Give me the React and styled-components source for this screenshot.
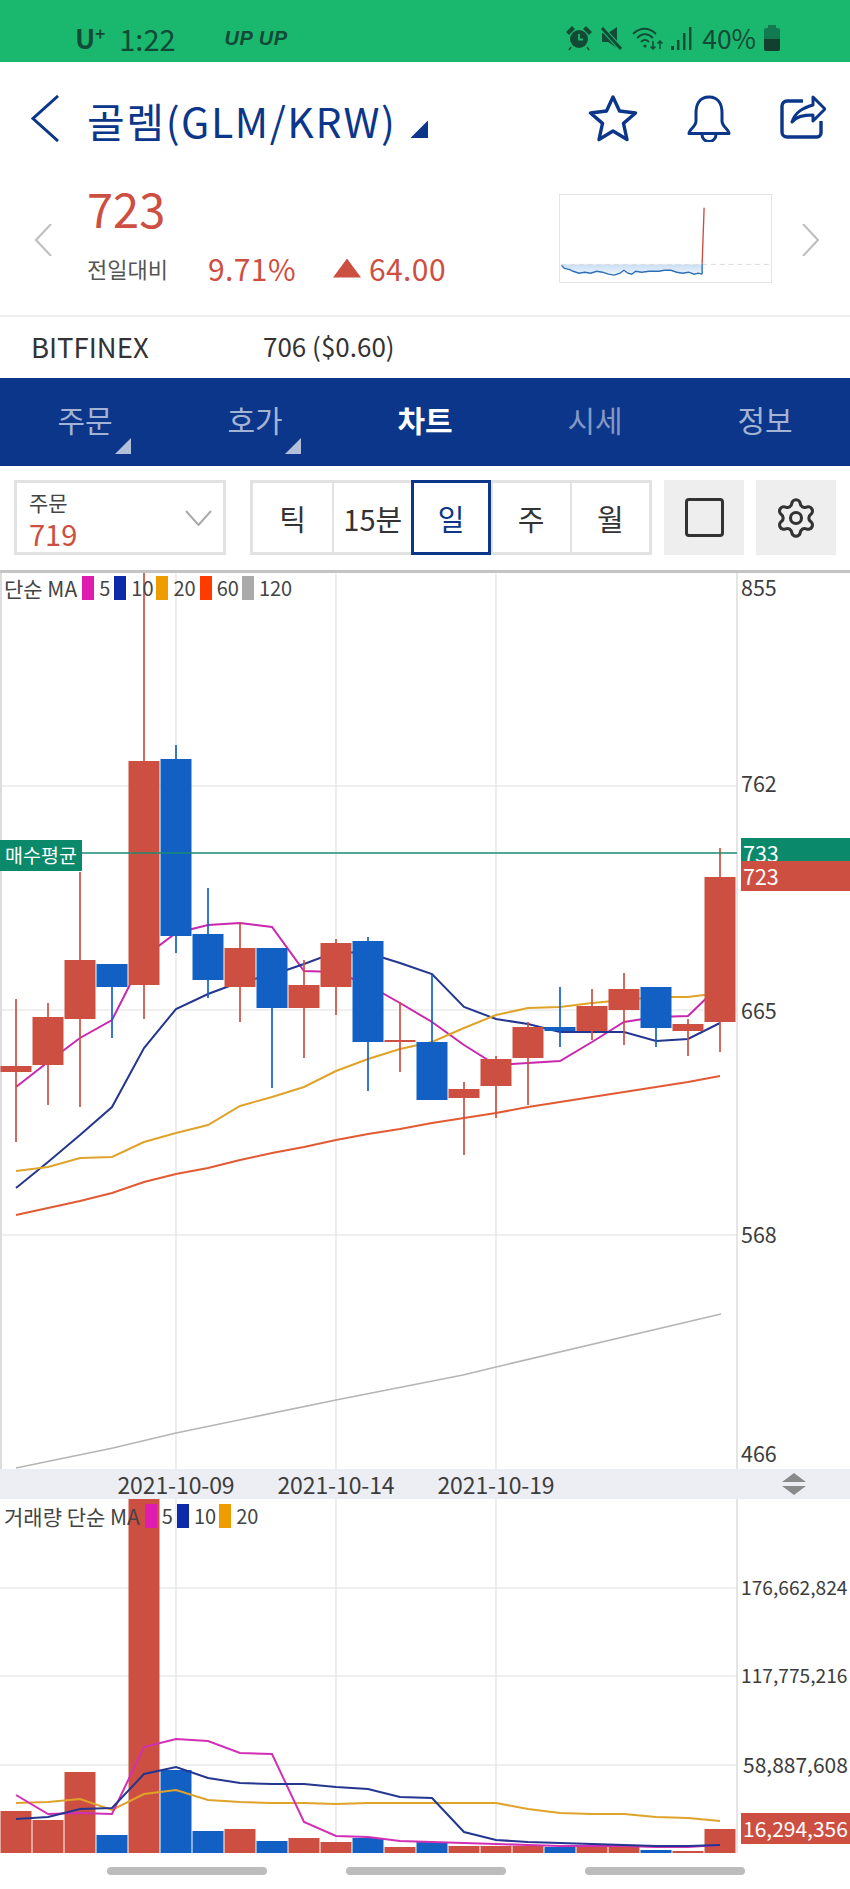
import React from "react";
import styled, { createGlobalStyle } from "styled-components";
import { Settings } from "lucide-react";

const NAVY = "#0b3689";
const RED = "#cd4f42";
const BLUE = "#1360c4";
const TEAL = "#0a8a6a";
const FONT = `"Noto Sans CJK KR", "Noto Sans", sans-serif`;

const GlobalStyle = createGlobalStyle`
  body {
    margin: 0;
    background: #fff;
    font-family: ${FONT};
    color: #333;
  }
`;

const Page = styled.div`
  width: 850px;
  height: 1889px;
  overflow: hidden;
`;

/* status bar */
const StatusBar = styled.div`
  height: 62px;
  background: #1ab86f;
  color: #134a35;
  display: flex;
  align-items: center;
  padding: 14px 70px 0 75px;
  box-sizing: border-box;
`;
const Carrier = styled.span`
  font-size: 27px;
  font-weight: 700;
  line-height: 30px;
  sup {
    font-size: 17px;
    line-height: 0;
    vertical-align: 9px;
  }
`;
const Clock = styled.span`
  font-size: 29px;
  line-height: 30px;
  margin-left: 14px;
`;
const AppMark = styled.span`
  font: italic 700 20px/20px "Liberation Sans", sans-serif;
  letter-spacing: 0.5px;
  margin-left: 49px;
`;
const StatusIcons = styled.div`
  margin-left: auto;
  display: flex;
  align-items: center;
  gap: 8px;
`;
const Battery = styled.span`
  font-size: 26.5px;
  line-height: 30px;
  margin-left: 2px;
`;

/* title */
const TitleRow = styled.div`
  height: 110px;
  display: flex;
  align-items: flex-start;
  padding: 33px 24px 0 31px;
  box-sizing: border-box;
`;
const Title = styled.h1`
  margin: 0 0 0 27px;
  font-size: 41px;
  font-weight: 400;
  line-height: 50px;
  letter-spacing: 1.6px;
  color: ${NAVY};
  white-space: nowrap;
`;
const TitleCaret = styled.span`
  width: 18px;
  height: 18px;
  margin: 25px 0 0 14px;
  background: ${NAVY};
  clip-path: polygon(100% 0, 100% 100%, 0 100%);
`;
const HeaderIcons = styled.div`
  margin-left: auto;
  display: flex;
  gap: 49px;
`;

/* quote */
const Quote = styled.div`
  height: 143px;
  display: flex;
  padding: 0 31px 0 35px;
  box-sizing: border-box;
`;
const SideArrow = styled.svg`
  flex: none;
  margin-top: 52px;
`;
const QuoteMain = styled.div`
  margin-left: 35px;
  padding-top: 12px;
`;
const Price = styled.div`
  font-size: 47px;
  line-height: 48px;
  color: ${RED};
`;
const ChangeRow = styled.div`
  display: flex;
  align-items: center;
  margin-top: 19px;
  height: 34px;
  color: ${RED};
  font-size: 30px;
  letter-spacing: 0.4px;
  white-space: nowrap;
`;
const ChangeCaption = styled.span`
  font-size: 22px;
  letter-spacing: 0;
  color: #555;
  width: 121px;
`;
const ChangeRate = styled.span`
  width: 125px;
`;
const UpMark = styled.span`
  width: 28px;
  height: 19px;
  margin-right: 8px;
  background: ${RED};
  clip-path: polygon(50% 0, 100% 100%, 0 100%);
`;
const Spark = styled.svg`
  flex: none;
  margin: 22px 0 0 auto;
  border: 1px solid #e4e4e4;
  box-sizing: border-box;
`;
const SparkNext = styled(SideArrow)`
  margin-left: 30px;
`;

/* exchange row */
const ExchangeRow = styled.div`
  height: 63px;
  border-top: 2px solid #eee;
  box-sizing: border-box;
  display: flex;
  align-items: center;
  padding: 0 0 4px 31px;
  font-size: 26px;
  color: #333;
`;
const ExchangeName = styled.span`
  width: 232px;
  font-size: 27.5px;
`;

/* tabs */
const Tabs = styled.div`
  height: 88px;
  background: ${NAVY};
  display: grid;
  grid-template-columns: repeat(5, 170px);
`;
const Tab = styled.div`
  position: relative;
  display: flex;
  align-items: center;
  justify-content: center;
  padding-bottom: 6px;
  box-sizing: border-box;
  font-size: 30px;
  font-weight: ${(p) => (p.$active ? 700 : 400)};
  color: ${(p) => (p.$active ? "#fff" : p.$dim ? "#8598c3" : "#a3b3d3")};
`;
const TabCorner = styled.span`
  position: absolute;
  right: 39px;
  bottom: 12px;
  width: 16px;
  height: 16px;
  background: #b3c0da;
  clip-path: polygon(100% 0, 100% 100%, 0 100%);
`;

/* controls */
const Controls = styled.div`
  height: 105px;
  padding: 14px 13px 16px 14px;
  box-sizing: border-box;
  display: flex;
`;
const Select = styled.div`
  width: 212px;
  border: 3px solid #e2e2e2;
  box-sizing: border-box;
  display: flex;
  align-items: center;
  justify-content: space-between;
  padding: 0 11px 0 12px;
`;
const SelectLabel = styled.div`
  font-size: 21px;
  line-height: 30px;
  color: #444;
`;
const SelectValue = styled.div`
  font-size: 29px;
  line-height: 32px;
  color: ${RED};
`;
const Segments = styled.div`
  width: 402px;
  margin-left: 24px;
  border: 3px solid #e2e2e2;
  box-sizing: border-box;
  display: grid;
  grid-template-columns: repeat(5, 1fr);
`;
const Segment = styled.div`
  display: flex;
  align-items: center;
  justify-content: center;
  font-size: 29px;
  color: ${(p) => (p.$active ? NAVY : "#333")};
  margin: ${(p) => (p.$active ? "-3px 0" : "0")};
  outline: ${(p) => (p.$active ? `3px solid ${NAVY}` : "none")};
  outline-offset: -3px;
  border-left: ${(p) => (p.$first || p.$active ? "none" : "2px solid #e2e2e2")};
`;
const SquareButton = styled.div`
  width: 80px;
  margin-left: 12px;
  background: #eee;
  display: flex;
  align-items: center;
  justify-content: center;
`;
const Outline = styled.span`
  width: 39px;
  height: 39px;
  border: 3px solid #333;
  border-radius: 4px;
  box-sizing: border-box;
`;

/* charts */
const Pane = styled.div`
  position: relative;
  height: ${(p) => p.$height}px;
`;
const PriceTop = styled(Pane)`
  border-top: 3px solid #c4c4c4;
  margin-top: -1px;
  height: 896px;
`;
const ChartSvg = styled.svg`
  display: block;
`;
const Legend = styled.div`
  position: absolute;
  left: 4px;
  top: ${(p) => p.$top}px;
  display: flex;
  align-items: center;
  font-size: 21px;
  line-height: 24px;
  color: #444;
  white-space: nowrap;
`;
const LegendValue = styled.span`
  font-size: 20px;
`;
const Swatch = styled.span`
  width: 12px;
  height: 24px;
  background: ${(p) => p.$color};
  margin: 0 5px 0 ${(p) => p.$gap}px;
`;
const AxisLabel = styled.span`
  position: absolute;
  left: ${(p) => p.$left || 741}px;
  top: ${(p) => p.$y}px;
  transform: translateY(-50%);
  font-size: ${(p) => p.$size || 21.5}px;
  line-height: 24px;
  color: #3d3d3d;
  white-space: nowrap;
`;
const AxisTag = styled.div`
  position: absolute;
  left: 741px;
  right: 0;
  top: ${(p) => p.$top}px;
  height: ${(p) => p.$height}px;
  background: ${(p) => p.$bg};
  color: #fff;
  font-size: ${(p) => p.$size || 21.5}px;
  line-height: ${(p) => p.$line}px;
  overflow: hidden;
  white-space: nowrap;
  padding-left: 2px;
`;
const AverageTag = styled.div`
  position: absolute;
  left: 0;
  top: 267px;
  width: 82px;
  height: 31px;
  background: ${TEAL};
  color: #fff;
  font-size: 19.5px;
  line-height: 30px;
  text-align: center;
  white-space: nowrap;
`;
const TimeStrip = styled.div`
  position: relative;
  height: 30px;
  background: #eceef3;
  z-index: 1;
`;
const DateLabel = styled.span`
  position: absolute;
  left: ${(p) => p.$x}px;
  top: 0;
  transform: translateX(-50%);
  font-size: 23px;
  line-height: 30px;
  letter-spacing: -0.1px;
  color: #3d3d3d;
`;
const ScrollHandle = styled.svg`
  position: absolute;
  left: 782px;
  top: 4px;
`;

/* navigation hint */
const Pills = styled.div`
  height: 36px;
  display: flex;
  padding: 14px 0 0 107px;
  box-sizing: border-box;
  gap: 79px;
`;
const Pill = styled.span`
  width: 160px;
  height: 8px;
  border-radius: 4px;
  background: #bcbcbc;
`;

/* data, in page pixels */
const candleX = (i) => 16 + 32 * i;
const candles = [
  ["r", 1066, 1072, 999, 1142],
  ["r", 1017, 1065, 1003, 1105],
  ["r", 960, 1019, 872, 1107],
  ["b", 964, 987, 964, 1038],
  ["r", 761, 985, 572, 1019],
  ["b", 759, 936, 745, 953],
  ["b", 934, 980, 888, 998],
  ["r", 948, 987, 922, 1022],
  ["b", 948, 1008, 948, 1088],
  ["r", 985, 1008, 960, 1058],
  ["r", 943, 987, 939, 1015],
  ["b", 941, 1042, 937, 1091],
  ["r", 1040, 1042, 1002, 1072],
  ["b", 1042, 1100, 975, 1100],
  ["r", 1089, 1098, 1082, 1155],
  ["r", 1059, 1086, 1056, 1118],
  ["r", 1027, 1058, 1022, 1105],
  ["b", 1027, 1031, 987, 1047],
  ["r", 1006, 1031, 989, 1040],
  ["r", 989, 1010, 973, 1045],
  ["b", 987, 1028, 987, 1047],
  ["r", 1024, 1031, 1019, 1056],
  ["r", 877, 1022, 848, 1052],
];
const priceLines = [
  { color: "#c927ad", ys: [1087, 1062, 1038, 1020, 957, 933, 925, 923, 927, 971, 972, 985, 1003, 1022, 1045, 1065, 1063, 1061, 1042, 1022, 1017, 1016, 985] },
  { color: "#24368f", ys: [1188, 1162, 1135, 1107, 1048, 1009, 994, 982, 975, 964, 952, 953, 963, 974, 1007, 1019, 1024, 1032, 1032, 1032, 1041, 1039, 1023] },
  { color: "#e0a32a", ys: [1171, 1167, 1158, 1157, 1142, 1133, 1125, 1106, 1097, 1087, 1071, 1059, 1049, 1042, 1028, 1015, 1008, 1007, 1003, 1000, 997, 997, 993] },
  { color: "#e25a34", ys: [1215, 1208, 1201, 1193, 1182, 1174, 1168, 1160, 1153, 1147, 1140, 1134, 1129, 1123, 1118, 1113, 1107, 1102, 1097, 1092, 1087, 1082, 1076] },
];
const longLine = "16,1468 113,1448 176,1433 336,1400 463,1375 496,1367 721,1314";
const volumes = [
  ["r", 1811], ["r", 1820], ["r", 1772], ["b", 1835], ["r", 1499], ["b", 1770],
  ["b", 1831], ["r", 1829], ["b", 1841], ["r", 1838], ["r", 1842], ["b", 1838],
  ["r", 1847], ["b", 1842], ["r", 1846], ["r", 1846], ["r", 1846], ["b", 1847],
  ["r", 1847], ["r", 1847], ["b", 1850], ["r", 1851], ["r", 1829],
];
const volumeLines = [
  { color: "#e0a32a", ys: [1803, 1802, 1799, 1810, 1794, 1790, 1800, 1802, 1803, 1803, 1804, 1803, 1803, 1803, 1803, 1803, 1809, 1813, 1814, 1814, 1817, 1818, 1821] },
  { color: "#d22fb5", ys: [1795, 1814, 1813, 1814, 1747, 1739, 1741, 1753, 1754, 1822, 1836, 1837, 1841, 1842, 1843, 1844, 1845, 1846, 1846, 1846, 1847, 1847, 1845] },
  { color: "#24368f", ys: [1819, 1817, 1809, 1808, 1774, 1767, 1778, 1783, 1784, 1784, 1787, 1789, 1797, 1798, 1832, 1840, 1842, 1843, 1844, 1845, 1846, 1846, 1845] },
];
const sparkPoints = [
  [0, 72], [3, 75], [8, 76], [12, 78], [18, 80], [24, 79], [30, 80], [36, 78], [42, 79], [48, 81], [54, 82],
  [60, 80], [64, 77], [68, 80], [72, 81], [76, 78], [82, 79], [90, 78], [100, 78], [105, 77], [112, 77],
  [118, 79], [124, 80], [130, 79], [136, 81], [140, 80], [144, 81],
];
const tabs = [
  { label: "주문", corner: true },
  { label: "호가", corner: true },
  { label: "차트", active: true },
  { label: "시세", dim: true },
  { label: "정보" },
];
const segments = ["틱", "15분", "일", "주", "월"];
const priceLegend = [
  { color: "#e01cb0", gap: 5, label: "5" },
  { color: "#0d2aa8", gap: 4, label: "10" },
  { color: "#ee9c00", gap: 3, label: "20" },
  { color: "#ff3b00", gap: 4, label: "60" },
  { color: "#ababab", gap: 3, label: "120" },
];
const volumeLegend = priceLegend.slice(0, 3);
const toPoints = (ys) => ys.map((y, i) => `${candleX(i)},${y}`).join(" ");

const Series = ({ lines }) =>
  lines.map((l) => (
    <polyline key={l.color} points={toPoints(l.ys)} fill="none" stroke={l.color} strokeWidth="2" />
  ));

const Grid = ({ rows, top, bottom }) => (
  <g stroke="#e2e2e2" strokeWidth="1.2">
    {rows.map((y) => (
      <line key={y} x1="0" x2="737" y1={y} y2={y} />
    ))}
    {[176, 336, 496].map((x) => (
      <line key={x} x1={x} x2={x} y1={top} y2={bottom} />
    ))}
    <line x1="737" x2="737" y1={top} y2={bottom} stroke="#d4d4d4" />
  </g>
);

const StatusGlyphs = () => (
  <StatusIcons>
    <svg width="26" height="26" viewBox="0 0 26 26">
      <circle cx="13" cy="14" r="9" fill="#134a35" />
      <path d="M13 9v5.5h4" fill="none" stroke="#1ab86f" strokeWidth="1.8" />
      <path d="M1 7l5-5 2 2-5 5zM25 7l-5-5-2 2 5 5zM5 22l-2 3M21 22l2 3" fill="#134a35" stroke="#134a35" strokeWidth="1.4" />
    </svg>
    <svg width="24" height="26" viewBox="0 0 24 26">
      <path d="M2 8h6l9-6v21l-9-6H2z" fill="#134a35" />
      <path d="M2 3l19 21" stroke="#1ab86f" strokeWidth="5" />
      <path d="M2 3l19 21" stroke="#134a35" strokeWidth="3" />
    </svg>
    <svg width="31" height="26" viewBox="0 0 31 26" fill="none" stroke="#134a35" strokeWidth="1.8">
      <path d="M1 9c7-7 16-7 23 0M5 13c5-5 11-5 16 0M9 17c3-3 5-3 8 0" />
      <circle cx="13" cy="21" r="1.6" fill="#134a35" stroke="none" />
      <path d="M21 16v8m-2.500-2.500l2.500 2.500 2.500-2.500M28 24v-8m-2.500 2.500l2.500-2.500 2.500 2.500" strokeWidth="1.5" />
    </svg>
    <svg width="21" height="25" viewBox="0 0 21 25" fill="#134a35">
      <rect x="0" y="20" width="3" height="4" />
      <rect x="6" y="14" width="2.4" height="10" />
      <rect x="12" y="7" width="2.4" height="17" />
      <rect x="18" y="1" width="2.4" height="23" />
    </svg>
    <Battery>40%</Battery>
    <svg width="16" height="26" viewBox="0 0 16 26">
      <rect x="4" y="0" width="8" height="3" fill="#127a50" />
      <rect x="0" y="3" width="16" height="23" rx="2" fill="#127a50" />
      <path d="M0 14h16v10a2 2 0 0 1-2 2H2a2 2 0 0 1-2-2z" fill="#123f2e" />
    </svg>
  </StatusIcons>
);

const HeaderGlyphs = () => (
  <HeaderIcons>
    <svg width="50" height="47" viewBox="0 0 50 47" fill="none" stroke={NAVY} strokeWidth="3.4" strokeLinejoin="round">
      <polygon points="25,2 31.5,16 47.5,18 35.5,28.4 39,44.5 25,36 11,44.5 14.5,28.4 2.5,18 18.5,16" />
    </svg>
    <svg width="44" height="47" viewBox="0 0 44 47" fill="none" stroke={NAVY} strokeWidth="3" strokeLinejoin="round">
      <path d="M22 2C12 2 9 10 9 18v8C9 32 2 34 2 38.500h40C42 34 35 32 35 26v-8C35 10 32 2 22 2z" />
      <path d="M15 39.500a7 7 0 0 0 14 0" />
    </svg>
    <svg width="46" height="44" viewBox="0 0 46 44" fill="none" stroke={NAVY} strokeWidth="3" strokeLinejoin="round">
      <path d="M23 6H7a5 5 0 0 0-5 5v26a5 5 0 0 0 5 5h30a4 4 0 0 0 4-4V26" strokeWidth="3.4" />
      <path d="M12 27C15 17 23 13 33 10V2l12 12-12 12v-6c-9 0-16 1-21 7z" fill="#fff" />
    </svg>
  </HeaderIcons>
);

const Sparkline = () => {
  const line = sparkPoints.map((p) => p.join(",")).join(" ");
  return (
    <Spark width="213" height="89" viewBox="0 0 213 89">
      <defs>
        <linearGradient id="sparkFill" x1="0" y1="0" x2="0" y2="1">
          <stop offset="0" stopColor="#c9def5" />
          <stop offset="1" stopColor="#eef5fc" />
        </linearGradient>
      </defs>
      <polygon points={`0,71 ${line} 144,71`} fill="url(#sparkFill)" />
      <line x1="0" x2="213" y1="71" y2="71" stroke="#d9d9d9" strokeDasharray="5 4" />
      <polyline points={line} fill="none" stroke="#2d6fb7" strokeWidth="1.4" />
      <line x1="144" x2="144" y1="81" y2="70" stroke="#2d6fb7" strokeWidth="1.4" />
      <line x1="144" x2="146" y1="70" y2="13" stroke={RED} strokeWidth="1.4" />
    </Spark>
  );
};

const PriceChart = () => (
  <PriceTop>
    <ChartSvg width="850" height="896" viewBox="0 573 850 896">
      <line x1="1" x2="1" y1="573" y2="1469" stroke="#dcdcdc" strokeWidth="2" />
      <Grid rows={[786, 1010, 1235]} top={573} bottom={1469} />
      <polyline points={longLine} fill="none" stroke="#b5b5b5" strokeWidth="1.6" />
      <Series lines={priceLines} />
      {candles.map(([kind, top, bottom, high, low], i) => (
        <g key={i} fill={kind === "r" ? RED : BLUE}>
          <rect x={candleX(i) - 1} y={high} width="2" height={low - high} opacity="0.85" />
          <rect x={candleX(i) - 15.5} y={top} width="31" height={bottom - top} />
        </g>
      ))}
      <line x1="82" x2="737" y1="853" y2="853" stroke="#1a8a72" strokeWidth="1.5" />
    </ChartSvg>
    <Legend $top={3}>
      단순 MA
      {priceLegend.map((item) => (
        <React.Fragment key={item.label}>
          <Swatch $color={item.color} $gap={item.gap} />
          <LegendValue>{item.label}</LegendValue>
        </React.Fragment>
      ))}
    </Legend>
    <AverageTag>매수평균</AverageTag>
    <AxisLabel $y={14}>855</AxisLabel>
    <AxisLabel $y={210}>762</AxisLabel>
    <AxisLabel $y={437}>665</AxisLabel>
    <AxisLabel $y={661}>568</AxisLabel>
    <AxisLabel $y={880}>466</AxisLabel>
    <AxisTag $top={265} $height={23} $bg={TEAL} $line={29}>733</AxisTag>
    <AxisTag $top={288} $height={30} $bg={RED} $line={30}>723</AxisTag>
  </PriceTop>
);

const VolumeChart = () => (
  <Pane $height={354}>
    <ChartSvg width="850" height="354" viewBox="0 1499 850 354">
      <Grid rows={[1588, 1676, 1765]} top={1499} bottom={1853} />
      {volumes.map(([kind, top], i) => (
        <rect key={i} x={candleX(i) - 15.5} y={top} width="31" height={1853 - top} fill={kind === "r" ? RED : BLUE} />
      ))}
      <Series lines={volumeLines} />
    </ChartSvg>
    <Legend $top={5}>
      거래량 단순 MA
      {volumeLegend.map((item) => (
        <React.Fragment key={item.label}>
          <Swatch $color={item.color} $gap={item.gap} />
          <LegendValue>{item.label}</LegendValue>
        </React.Fragment>
      ))}
    </Legend>
    <AxisLabel $y={88} $size={19.2}>176,662,824</AxisLabel>
    <AxisLabel $y={176} $size={19.2}>117,775,216</AxisLabel>
    <AxisLabel $y={265} $size={21} $left={743}>58,887,608</AxisLabel>
    <AxisTag $top={314} $height={31} $bg={RED} $line={30} $size={21}>16,294,356</AxisTag>
  </Pane>
);

export default function App() {
  return (
    <Page>
      <GlobalStyle />
      <StatusBar>
        <Carrier>U<sup>+</sup></Carrier>
        <Clock>1:22</Clock>
        <AppMark>UP UP</AppMark>
        <StatusGlyphs />
      </StatusBar>

      <TitleRow>
        <svg width="29" height="47" viewBox="0 0 29 47" fill="none" stroke={NAVY} strokeWidth="3">
          <polyline points="27,1 2,23.500 27,46" />
        </svg>
        <Title>골렘(GLM/KRW)</Title>
        <TitleCaret />
        <HeaderGlyphs />
      </TitleRow>

      <Quote>
        <SideArrow width="17" height="32" viewBox="0 0 17 32" fill="none" stroke="#bdbdbd" strokeWidth="2">
          <polyline points="16,0 1,16 16,32" />
        </SideArrow>
        <QuoteMain>
          <Price>723</Price>
          <ChangeRow>
            <ChangeCaption>전일대비</ChangeCaption>
            <ChangeRate>9.71%</ChangeRate>
            <UpMark />
            64.00
          </ChangeRow>
        </QuoteMain>
        <Sparkline />
        <SparkNext width="17" height="32" viewBox="0 0 17 32" fill="none" stroke="#bdbdbd" strokeWidth="2">
          <polyline points="1,0 16,16 1,32" />
        </SparkNext>
      </Quote>

      <ExchangeRow>
        <ExchangeName>BITFINEX</ExchangeName>
        706 ($0.60)
      </ExchangeRow>

      <Tabs>
        {tabs.map((t) => (
          <Tab key={t.label} $active={t.active} $dim={t.dim}>
            {t.label}
            {t.corner && <TabCorner />}
          </Tab>
        ))}
      </Tabs>

      <Controls>
        <Select>
          <div>
            <SelectLabel>주문</SelectLabel>
            <SelectValue>719</SelectValue>
          </div>
          <svg width="27" height="16" viewBox="0 0 27 16" fill="none" stroke="#aaa" strokeWidth="2">
            <polyline points="1,1 13.500,15 26,1" />
          </svg>
        </Select>
        <Segments>
          {segments.map((s, i) => (
            <Segment key={s} $active={s === "일"} $first={i === 0}>
              {s}
            </Segment>
          ))}
        </Segments>
        <SquareButton>
          <Outline />
        </SquareButton>
        <SquareButton>
          <Settings size={44} strokeWidth={1.7} color="#333" />
        </SquareButton>
      </Controls>

      <PriceChart />

      <TimeStrip>
        <DateLabel $x={176}>2021-10-09</DateLabel>
        <DateLabel $x={336}>2021-10-14</DateLabel>
        <DateLabel $x={496}>2021-10-19</DateLabel>
        <ScrollHandle width="24" height="22" viewBox="0 0 24 22" fill="#8a8a8a">
          <polygon points="12,0 24,9 0,9" />
          <polygon points="0,13 24,13 12,22" />
        </ScrollHandle>
      </TimeStrip>

      <VolumeChart />

      <Pills>
        <Pill />
        <Pill />
        <Pill />
      </Pills>
    </Page>
  );
}
